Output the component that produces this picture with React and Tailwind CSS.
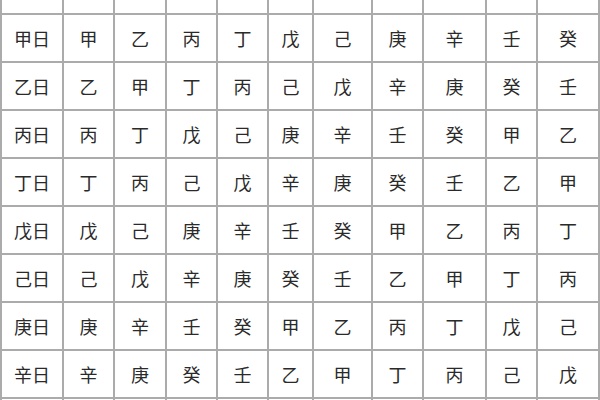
import React from "react";

const blank = ["", "", "", "", "", "", "", "", "", "", ""];

const rows = [
  ["甲日", "甲", "乙", "丙", "丁", "戊", "己", "庚", "辛", "壬", "癸"],
  ["乙日", "乙", "甲", "丁", "丙", "己", "戊", "辛", "庚", "癸", "壬"],
  ["丙日", "丙", "丁", "戊", "己", "庚", "辛", "壬", "癸", "甲", "乙"],
  ["丁日", "丁", "丙", "己", "戊", "辛", "庚", "癸", "壬", "乙", "甲"],
  ["戊日", "戊", "己", "庚", "辛", "壬", "癸", "甲", "乙", "丙", "丁"],
  ["己日", "己", "戊", "辛", "庚", "癸", "壬", "乙", "甲", "丁", "丙"],
  ["庚日", "庚", "辛", "壬", "癸", "甲", "乙", "丙", "丁", "戊", "己"],
  ["辛日", "辛", "庚", "癸", "壬", "乙", "甲", "丁", "丙", "己", "戊"],
];

export default function App() {
  // header row sits mostly above the window, last row mostly below it
  const all = [blank, ...rows, blank];

  return (
    <div className="w-[600px] h-[400px] overflow-hidden bg-white">
      <div
        className="-mt-[35px] grid grid-cols-[60px_49px_50px_49px_49px_43px_57px_49px_61px_49px_60px] auto-rows-[46px] gap-[2px] border-2 border-[#ababab] bg-[#ababab] text-[18px] text-[#2a2a2a]"
        style={{ fontFamily: '"Noto Sans CJK SC", sans-serif' }}
      >
        {all.map((row, r) =>
          row.map((cell, c) => (
            <div
              key={`${r}-${c}`}
              className="flex items-center justify-center bg-white font-normal leading-none"
            >
              {cell}
            </div>
          ))
        )}
      </div>
    </div>
  );
}
